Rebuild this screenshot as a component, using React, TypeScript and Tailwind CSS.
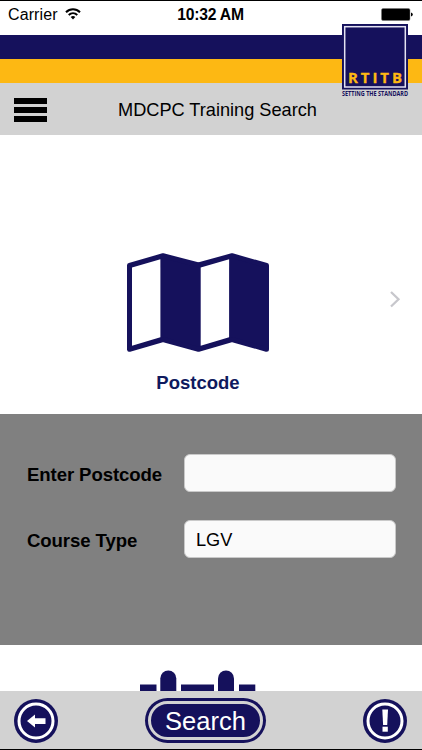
import React from "react";

interface FieldRowProps {
  label: string;
  id: string;
  defaultValue?: string;
}

const StatusBar: React.FC = () => (
  <div className="flex h-[35px] shrink-0 items-start justify-between border-t border-black bg-white pl-2 pr-[9px] text-black">
    <div className="flex flex-1 items-center gap-[7px] pt-[5px]">
      <span className="text-[16px] leading-[18px] tracking-[0.1px]">Carrier</span>
      <svg width="16" height="12" viewBox="0 0 16 12" fill="none" className="mb-[3px]">
        <path d="M1 4.2C5 .2 11 .2 15 4.2" stroke="#000" strokeWidth="2" />
        <path d="M3.7 7C6.2 4.6 9.8 4.6 12.3 7" stroke="#000" strokeWidth="1.9" />
        <path d="M5.7 9C7 7.7 9 7.7 10.3 9L8 11.6Z" fill="#000" />
      </svg>
    </div>
    <span className="pt-[5px] text-[15.7px] font-bold leading-[18px] tracking-[-0.22px]">10:32 AM</span>
    <div className="flex flex-1 justify-end pt-[7px]">
      <svg width="32" height="13" viewBox="0 0 32 13">
        <rect x="0.5" y="0.5" width="28.5" height="12" rx="1.5" fill="#000" stroke="#777" strokeWidth="0.5" />
        <path d="M30 4.5Q31.8 5 31.8 6.5T30 8.5Z" fill="#000" />
      </svg>
    </div>
  </div>
);

const Logo: React.FC = () => (
  <svg className="absolute left-[341px] top-[23px] overflow-visible" width="68" height="78" viewBox="0 0 68 78">
    <rect x="1" y="1" width="66" height="65.5" fill="#15115c" />
    <rect x="3.7" y="3.7" width="60.6" height="60.3" fill="none" stroke="#e4e3f2" strokeWidth="1.5" />
    <text
      x="7"
      y="60.3"
      textLength="54"
      fill="#fdb813"
      stroke="#fdb813"
      strokeWidth="0.3"
      className="font-['Open_Sans',sans-serif] text-[15px] font-bold"
    >
      RTITB
    </text>
    <text
      x="1"
      y="73"
      textLength="66"
      lengthAdjust="spacingAndGlyphs"
      fill="#15115c"
      className="font-['Open_Sans',sans-serif] text-[6.6px] font-bold"
    >
      SETTING THE STANDARD
    </text>
  </svg>
);

const Header: React.FC = () => (
  <header className="shrink-0">
    <div className="h-6 bg-[#15115c]" />
    <div className="h-[24px] bg-[#fdb813]" />
    <div className="grid h-[52px] grid-cols-[118px_1fr] items-center bg-[#d2d2d2] pt-[2px]">
      <button aria-label="Menu" className="ml-[14px] flex w-[33px] flex-col gap-[3px]">
        <span className="h-[6px] bg-black" />
        <span className="h-[6px] bg-black" />
        <span className="h-[6px] bg-black" />
      </button>
      <h1 className="whitespace-nowrap text-[18.2px] leading-6 tracking-[-0.01px] text-black">MDCPC Training Search</h1>
    </div>
  </header>
);

const MapIcon: React.FC = () => (
  <svg width="142" height="100" viewBox="0 0 142 100">
    <path
      d="M2.5 12.5 36 2.7 71.5 12 105 2.7 139.5 12.5V96.3L105 86.5 71.5 96.3 36 86.5 2.5 96.3Z"
      fill="#15115c"
      stroke="#15115c"
      strokeWidth="5"
      strokeLinejoin="round"
    />
    <path d="M5 14.5 33.4 6.3V84.3L5 92.8Z" fill="#fff" />
    <path d="M73.7 14.5 102.1 6.3V84.3L73.7 92.8Z" fill="#fff" />
  </svg>
);

const FieldRow: React.FC<FieldRowProps> = ({ label, id, defaultValue }) => (
  <div className="flex h-[38px] items-center">
    <label htmlFor={id} className="w-[157px] whitespace-nowrap pt-[3px] text-[18.6px] font-bold leading-6 tracking-[-0.1px] text-black">
      {label}
    </label>
    <input
      id={id}
      defaultValue={defaultValue}
      className="h-[38px] w-[212px] rounded-[6px] border border-[#c9c9c9] bg-[#fafafa] px-[11px] pt-[2px] text-[18.2px] text-black outline-none"
    />
  </div>
);

const CalendarIcon: React.FC = () => (
  <svg width="116" height="21" viewBox="0 0 116 21" fill="#15115c">
    <path d="M0 14.5H16.5V21H0Z" />
    <path d="M20.3 21V8.5a8 8 0 0 1 16 0V21Z" />
    <path d="M41 14.5H74V21H41Z" />
    <path d="M78 21V8.5a8 8 0 0 1 16 0V21Z" />
    <path d="M99 14.5H115.3V21H99Z" />
  </svg>
);

const Footer: React.FC = () => (
  <footer className="grid h-[59px] shrink-0 grid-cols-[131px_1fr_44px] items-center border-b border-black bg-[#d2d2d2] pb-px pl-[14px] pr-[15px] pt-[2px]">
    <button aria-label="Back">
      <svg width="44" height="44" viewBox="0 0 44 44" className="block">
        <circle cx="22" cy="22" r="22" fill="#15115c" />
        <circle cx="22" cy="22" r="17" fill="#15115c" stroke="#fff" strokeWidth="3" />
        <path d="M13 22 21 15.5V19.2H31.5V25H21V28.5Z" fill="#fff" />
      </svg>
    </button>
    <button className="flex h-[45px] w-[121px] items-center justify-center rounded-full bg-[#15115c] p-[3px]">
      <span className="flex h-full w-full items-center justify-center rounded-full border-[3px] border-[#d2d2d2] pt-[2px] text-[25.5px] leading-none text-white">
        Search
      </span>
    </button>
    <button aria-label="Information">
      <svg width="44" height="44" viewBox="0 0 44 44" className="block">
        <circle cx="22" cy="22" r="22" fill="#15115c" />
        <circle cx="22" cy="22" r="17" fill="#15115c" stroke="#fff" strokeWidth="3" />
        <path d="M19.3 10.5H25L24.2 26H20.1Z" fill="#fff" />
        <rect x="19.5" y="27.7" width="5.3" height="5" fill="#fff" />
      </svg>
    </button>
  </footer>
);

const App: React.FC = () => {
  return (
    <div className="relative flex h-[750px] w-[422px] flex-col overflow-hidden bg-white font-['Liberation_Sans',Arial,sans-serif]">
      <StatusBar />
      <Header />
      <Logo />
      <main className="flex min-h-0 flex-1 flex-col">
        <section className="grid h-[279px] shrink-0 grid-cols-[127px_142px_1fr] items-start pt-[118px]">
          <div className="col-start-2 flex flex-col items-center">
            <MapIcon />
            <h2 className="mt-[18px] text-[18.5px] font-bold leading-6 text-[#0f1a5e]">Postcode</h2>
          </div>
          <svg width="12" height="18" viewBox="0 0 12 18" className="mr-[21px] mt-[37px] justify-self-end">
            <path d="M2 2 9.5 9.3 2 16.5" fill="none" stroke="#c7c7cc" strokeWidth="2.3" />
          </svg>
        </section>
        <section className="flex h-[231px] shrink-0 flex-col gap-[28px] bg-[#808080] pl-[27px] pt-[40px]">
          <FieldRow label="Enter Postcode" id="postcode" />
          <FieldRow label="Course Type" id="course-type" defaultValue="LGV" />
        </section>
        <section className="flex flex-1 items-end pl-[140px]">
          <CalendarIcon />
        </section>
      </main>
      <Footer />
    </div>
  );
};

export default App;
